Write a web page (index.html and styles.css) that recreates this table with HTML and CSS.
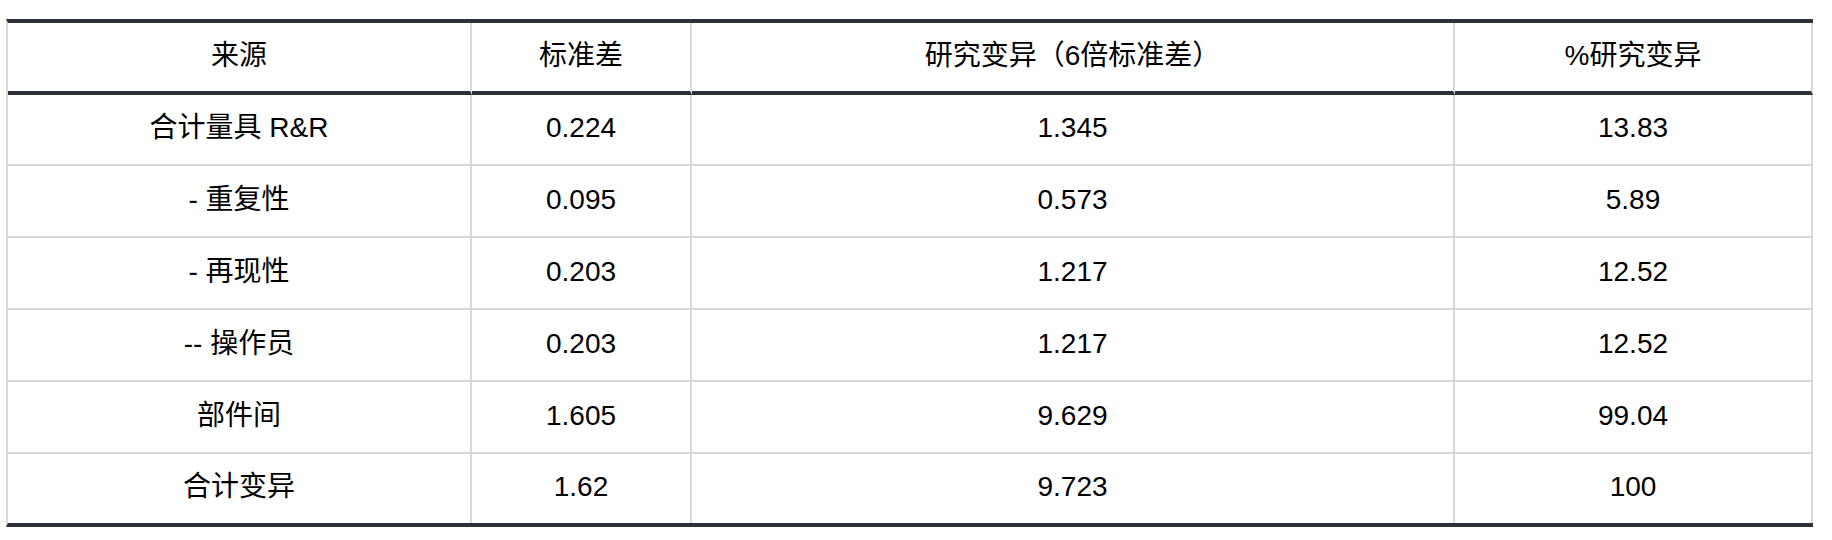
FILE: index.html
```html
<!DOCTYPE html>
<html lang="zh-CN">
<head>
<meta charset="utf-8">
<title>量具 R&amp;R</title>
<link rel="stylesheet" href="styles.css">
</head>
<body>
<div class="wrap">
  <table class="grr">
    <colgroup>
      <col class="c1"><col class="c2"><col class="c3"><col class="c4">
    </colgroup>
    <thead>
      <tr><th>来源</th><th>标准差</th><th>研究变异（6倍标准差）</th><th>%研究变异</th></tr>
    </thead>
    <tbody>
      <tr><td>合计量具 R&amp;R</td><td>0.224</td><td>1.345</td><td>13.83</td></tr>
      <tr><td>- 重复性</td><td>0.095</td><td>0.573</td><td>5.89</td></tr>
      <tr><td>- 再现性</td><td>0.203</td><td>1.217</td><td>12.52</td></tr>
      <tr><td>-- 操作员</td><td>0.203</td><td>1.217</td><td>12.52</td></tr>
      <tr><td>部件间</td><td>1.605</td><td>9.629</td><td>99.04</td></tr>
      <tr><td>合计变异</td><td>1.62</td><td>9.723</td><td>100</td></tr>
    </tbody>
  </table>
</div>
</body>
</html>
```
FILE: styles.css
```css
html, body {
  margin: 0;
  padding: 0;
  background: #ffffff;
}

.wrap {
  padding: 19px 21px 0 6px;
}

.grr {
  width: 1805px;
  table-layout: fixed;
  border-collapse: separate;
  border-spacing: 0;
  border-top: 4px solid #2c313c;
  border-bottom: 4px solid #2c313c;
  border-left: 2px solid #d9d9d9;
  font-family: "Liberation Sans", Arial, "Noto Sans CJK SC", sans-serif;
  font-size: 28px;
  line-height: 1.2;
  color: #000000;
}

.c1 { width: 464px; }
.c2 { width: 220px; }
.c3 { width: 763px; }
.c4 { width: 358px; }

.grr th,
.grr td {
  padding: 0 0 3px 0;
  text-align: center;
  vertical-align: middle;
  font-weight: normal;
  border-right: 2px solid #d9d9d9;
}

.grr th {
  height: 65px;
  border-bottom: 4px solid #2c313c;
}

.grr td {
  height: 67px;
  border-bottom: 2px solid #d9d9d9;
}

.grr tbody tr:first-child td {
  height: 66px;
}

.grr tbody tr:last-child td {
  height: 66px;
  border-bottom: none;
}
```
